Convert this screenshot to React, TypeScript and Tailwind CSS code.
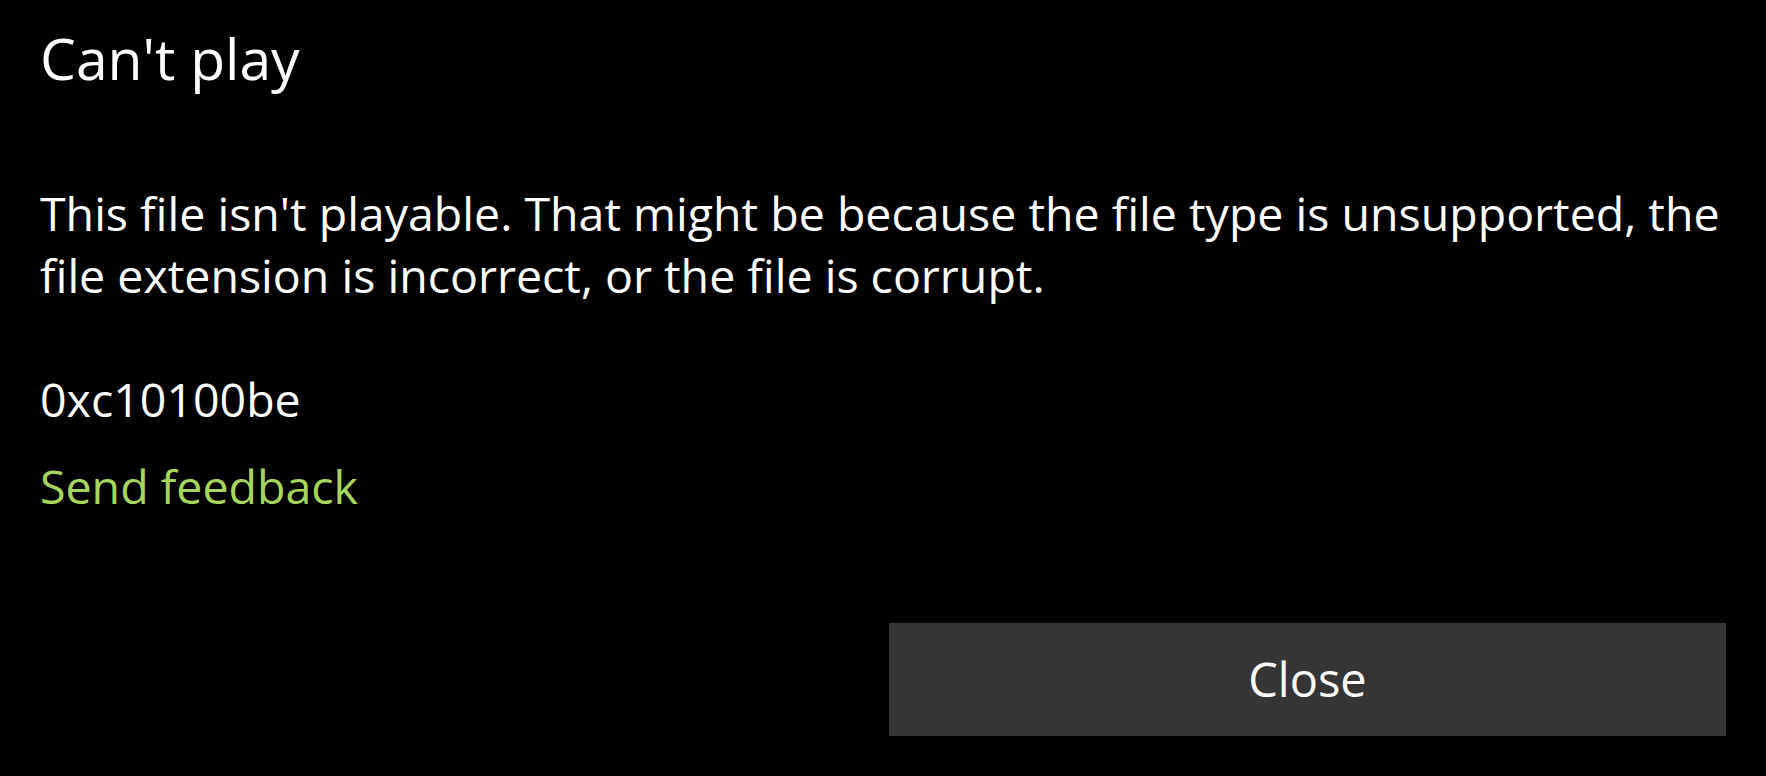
export default function App() {
  return (
    <div
      className="min-h-screen w-full bg-black text-white"
      style={{ fontFamily: '"Open Sans", "Noto Sans", sans-serif' }}
    >
      <div className="flex h-[776px] flex-col px-10 pt-[22px]">
        <h1 className="text-[57px] leading-[72px] font-normal text-white">Can't play</h1>

        <p className="mt-[88px] text-[46.5px] leading-[62px] text-white">
          This file isn't playable. That might be because the file type is unsupported, the file
          extension is incorrect, or the file is corrupt.
        </p>

        <p className="mt-[62px] text-[46.5px] leading-[62px] text-white">0xc10100be</p>

        <a href="#" className="mt-[25px] text-[46.5px] leading-[62px] text-[#a7d65c]">
          Send feedback
        </a>

        <div className="mt-auto mb-10 grid grid-cols-2 gap-3">
          <button className="col-start-2 h-[113px] bg-[#353535] text-[47px] text-white">
            Close
          </button>
        </div>
      </div>
    </div>
  );
}
